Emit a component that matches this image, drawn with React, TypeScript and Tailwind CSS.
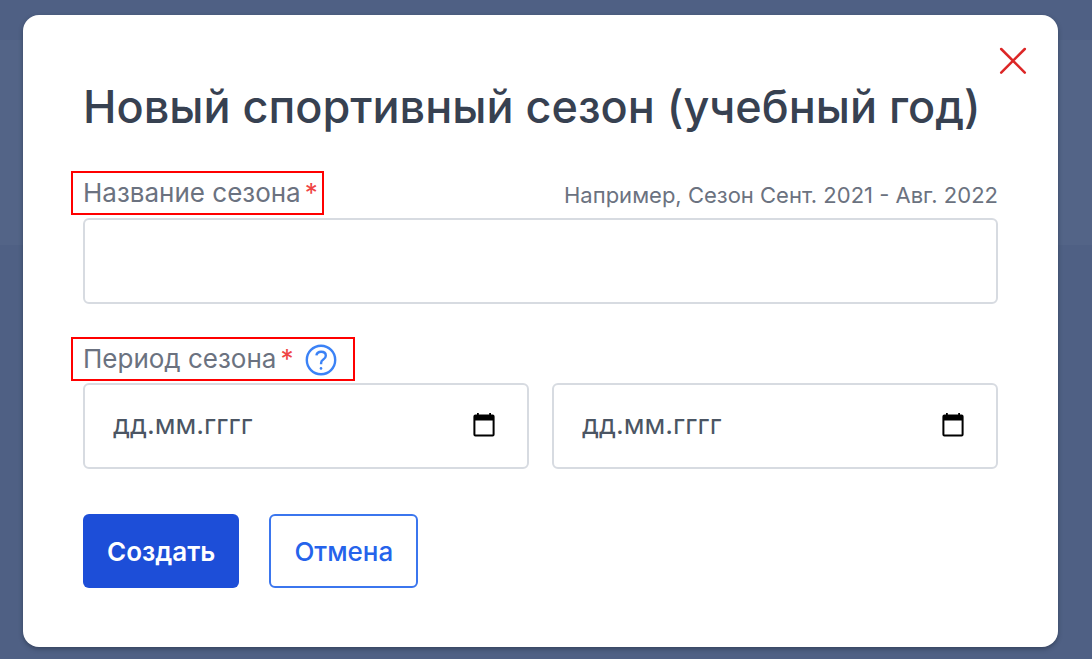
import { useState } from 'react'

function CloseIcon() {
    return (
        <svg viewBox="0 0 28 28" className="size-7" fill="none" stroke="currentColor" strokeWidth="2.5" strokeLinecap="round">
            <path d="M2.2 2l23.6 23.6M25.8 2L2.2 25.6" />
        </svg>
    )
}

function HelpIcon() {
    return (
        <svg viewBox="0 0 32 32" className="size-8" fill="none" stroke="currentColor" strokeWidth="2.4">
            <circle cx="16" cy="16" r="14.2" />
            <path d="M11.4 11.4c.4-2.2 2.2-3.6 4.7-3.6 2.8 0 4.7 1.6 4.7 3.9 0 1.8-.9 2.8-2.5 3.8-1.6 1-2.2 1.8-2.2 3.4v1.3" />
            <circle cx="16" cy="24.4" r="1.3" fill="currentColor" stroke="none" />
        </svg>
    )
}

function CalendarIcon() {
    return (
        <svg viewBox="0 0 22 24" className="h-6 w-[22px]" fill="currentColor">
            <path fillRule="evenodd" d="M4 0h1.8v1.6h10.4V0H18v1.6h1.6a2 2 0 0 1 2 2v17.8a2 2 0 0 1-2 2H2.4a2 2 0 0 1-2-2V3.6a2 2 0 0 1 2-2H4zM2.4 7.6v13.8h17.2V7.6z" />
        </svg>
    )
}

function DateField({ id, label }: { id: string; label: string }) {
    const [value, setValue] = useState('')

    return (
        <div className="flex h-[86px] items-center rounded-md border-2 border-[#d7dbe1] pr-8 pb-0.5 pl-7">
            <input
                id={id}
                type="text"
                aria-label={label}
                placeholder="дд.мм.гггг"
                value={value}
                onChange={(e) => setValue(e.target.value)}
                className="w-full min-w-0 grow text-[27px] text-[#4b5563] outline-none placeholder:text-[#4b5563]"
            />
            <button type="button" aria-label="Открыть календарь" className="shrink-0 text-black">
                <CalendarIcon />
            </button>
        </div>
    )
}

export default function App() {
    const [name, setName] = useState('')

    return (
        <div className="relative min-h-screen bg-[#4f6084] pt-[15px] pr-[34px] pb-3 pl-[23px] font-['Inter',sans-serif]">
            {/* dimmed page behind the dialog */}
            <div className="absolute inset-x-0 top-10 h-[205px] bg-[#536487]" />

            <div role="dialog" aria-labelledby="season-title" className="relative rounded-2xl bg-white px-[60px] pt-[60px] pb-[59px] shadow-[0_2px_4px_rgba(30,41,59,0.5)]">
                <button type="button" aria-label="Закрыть" className="absolute top-8 right-[31px] text-[#dc2626]">
                    <CloseIcon />
                </button>

                <h2 id="season-title" className="text-[45px] leading-[64px] font-medium text-[#374151]">Новый спортивный сезон (учебный год)</h2>

                <form onSubmit={(e) => e.preventDefault()}>
                    <div className="mt-8 mb-[3px] flex items-center justify-between">
                        <label htmlFor="season-name" className="-ml-3 flex h-11 items-center border-2 border-[#ff0000] pr-1 pb-0.5 pl-[10px] text-[26px] text-[#6b7280]">
                            Название сезона<span className="ml-1 text-[#ef4444]">*</span>
                        </label>
                        <span className="pt-1 text-[22px] text-[#6b7280]">Например, Сезон Сент. 2021 - Авг. 2022</span>
                    </div>
                    <input
                        id="season-name"
                        type="text"
                        value={name}
                        onChange={(e) => setName(e.target.value)}
                        className="h-[86px] w-full rounded-md border-2 border-[#d7dbe1] px-7 text-[27px] text-[#4b5563] outline-none"
                    />

                    <div className="mt-[33px] mb-0.5 flex">
                        <div className="-ml-3 flex h-11 items-center gap-3 border-2 border-[#ff0000] pr-4 pl-[10px]">
                            <label htmlFor="season-start" className="flex pb-0.5 text-[26px] text-[#6b7280]">
                                Период сезона<span className="ml-1 text-[#ef4444]">*</span>
                            </label>
                            <button type="button" aria-label="Подсказка" className="pt-0.5 text-[#3b82f6]">
                                <HelpIcon />
                            </button>
                        </div>
                    </div>
                    <div className="grid grid-cols-2 gap-[23px]">
                        <DateField id="season-start" label="Начало сезона" />
                        <DateField id="season-end" label="Конец сезона" />
                    </div>

                    <div className="mt-[45px] flex gap-[30px]">
                        <button type="submit" className="h-[74px] rounded-md bg-[#1d4ed8] px-6 text-[26px] font-semibold text-white">Создать</button>
                        <button type="button" className="h-[74px] rounded-md border-2 border-[#3b76ee] px-[23px] text-[26px] font-medium text-[#2563eb]">Отмена</button>
                    </div>
                </form>
            </div>
        </div>
    )
}
